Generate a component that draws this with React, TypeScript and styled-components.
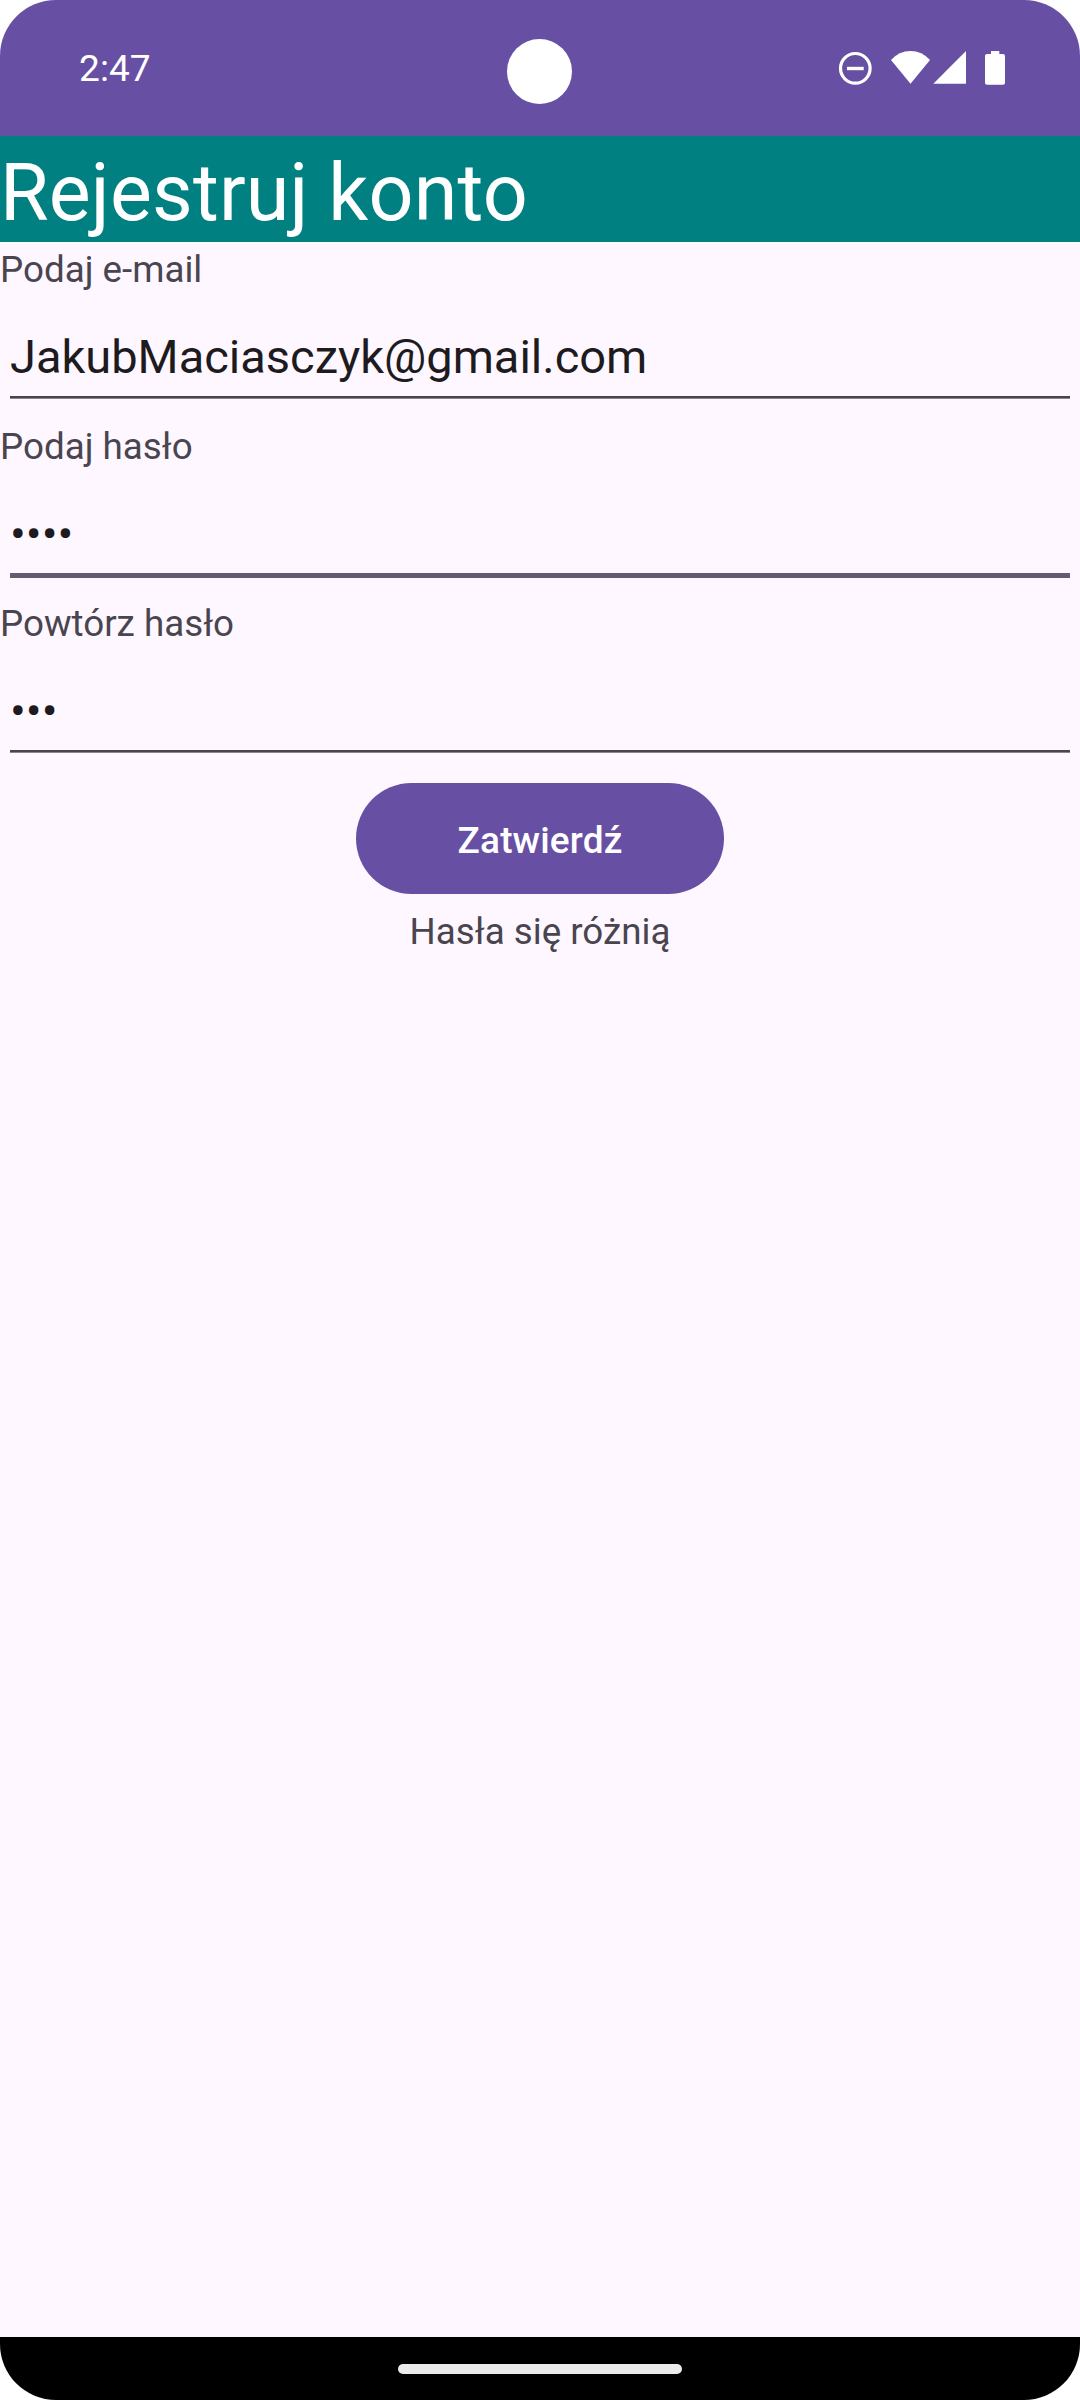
import React from 'react';
import styled, { createGlobalStyle } from 'styled-components';

const GlobalStyle = createGlobalStyle`
  * { box-sizing: border-box; }
  html, body { margin: 0; padding: 0; background: #ffffff; }
  body { font-family: Roboto, "Noto Sans", sans-serif; }
`;

const Screen = styled.main`
  position: relative;
  display: flex;
  flex-direction: column;
  width: 1080px;
  height: 2400px;
  overflow: hidden;
  border-radius: 56px;
  background: #fef7ff;
`;

const StatusBar = styled.header`
  display: flex;
  flex: none;
  justify-content: space-between;
  height: 136px;
  padding: 0 75px 0 79px;
  background: #6750a4;
  color: #ffffff;
`;

const Clock = styled.time`
  padding-top: 47px;
  font-size: 37px;
  line-height: 44px;
  letter-spacing: 0.1px;
`;

const StatusIcons = styled.svg`
  display: block;
  width: 170px;
  height: 40px;
  margin-top: 48px;
`;

const Camera = styled.div`
  position: absolute;
  top: 39px;
  left: 507px;
  width: 65px;
  height: 65px;
  border-radius: 50%;
  background: #ffffff;
`;

const Title = styled.h1`
  flex: none;
  height: 106px;
  margin: 0;
  background: #008080;
  color: #ffffff;
  font-size: 79px;
  font-weight: 400;
  line-height: 114px;
  letter-spacing: 0.15px;
`;

const Form = styled.form`
  display: flex;
  flex: 1;
  flex-direction: column;
  align-items: center;
`;

const Field = styled.div`
  display: flex;
  flex-direction: column;
  width: 100%;
  height: 177px;
`;

const Caption = styled.span`
  height: 50px;
  color: #49454f;
  font-size: 36.75px;
  line-height: 56px;
`;

const Value = styled.div`
  height: 104px;
  margin: 0 10px;
  padding-top: 37px;
  color: #1d1b20;
  font-size: 47px;
  line-height: 56px;
`;

const Underline = styled.div<{ $focused?: boolean }>`
  height: ${(p) => (p.$focused ? 5 : 3)}px;
  margin: 0 10px;
  background: ${(p) =>
    p.$focused ? '#625b71' : 'linear-gradient(#49454f 0 2px, #8a858f 2px 3px)'};
`;

const SubmitButton = styled.button`
  width: 368px;
  height: 111px;
  margin: 10px 0;
  padding: 3px 0 0;
  border: 0;
  border-radius: 56px;
  background: #6750a4;
  color: #ffffff;
  font-family: inherit;
  font-size: 37px;
  font-weight: 500;
  letter-spacing: 0.15px;
`;

const NavigationBar = styled.footer`
  display: flex;
  flex: none;
  justify-content: center;
  height: 63px;
  padding-top: 27px;
  background: #000000;
`;

const Handle = styled.div`
  width: 284px;
  height: 10px;
  border-radius: 5px;
  background: #ebebeb;
`;

interface FieldData {
  label: string;
  value: string;
  focused?: boolean;
}

const fields: FieldData[] = [
  { label: 'Podaj e-mail', value: 'JakubMaciasczyk@gmail.com' },
  { label: 'Podaj hasło', value: '••••', focused: true },
  { label: 'Powtórz hasło', value: '•••' },
];

export default function App() {
  return (
    <>
      <GlobalStyle />
      <Screen>
        <StatusBar>
          <Clock>2:47</Clock>
          <StatusIcons viewBox="835 48 170 40" aria-hidden="true">
            <circle cx="855.3" cy="68.3" r="14.8" fill="none" stroke="#fff" strokeWidth="3.2" />
            <path d="M847 68.5h16.7" stroke="#fff" strokeWidth="3.4" />
            <path d="M891 60Q899 51 910.5 51T930 60L910.5 83.7Z" fill="#fff" />
            <path d="M933.3 83.7L966 51V83.7Z" fill="#fff" />
            <path
              d="M991 51h8.3v3H1003a2 2 0 0 1 2 2V82.7a2 2 0 0 1-2 2H987a2 2 0 0 1-2-2V56a2 2 0 0 1 2-2h4Z"
              fill="#fff"
            />
          </StatusIcons>
        </StatusBar>
        <Camera />
        <Title>Rejestruj konto</Title>
        <Form>
          {fields.map((field) => (
            <Field key={field.label}>
              <Caption>{field.label}</Caption>
              <Value>{field.value}</Value>
              <Underline $focused={field.focused} />
            </Field>
          ))}
          <SubmitButton type="button">Zatwierdź</SubmitButton>
          <Caption role="alert">Hasła się różnią</Caption>
        </Form>
        <NavigationBar>
          <Handle />
        </NavigationBar>
      </Screen>
    </>
  );
}
